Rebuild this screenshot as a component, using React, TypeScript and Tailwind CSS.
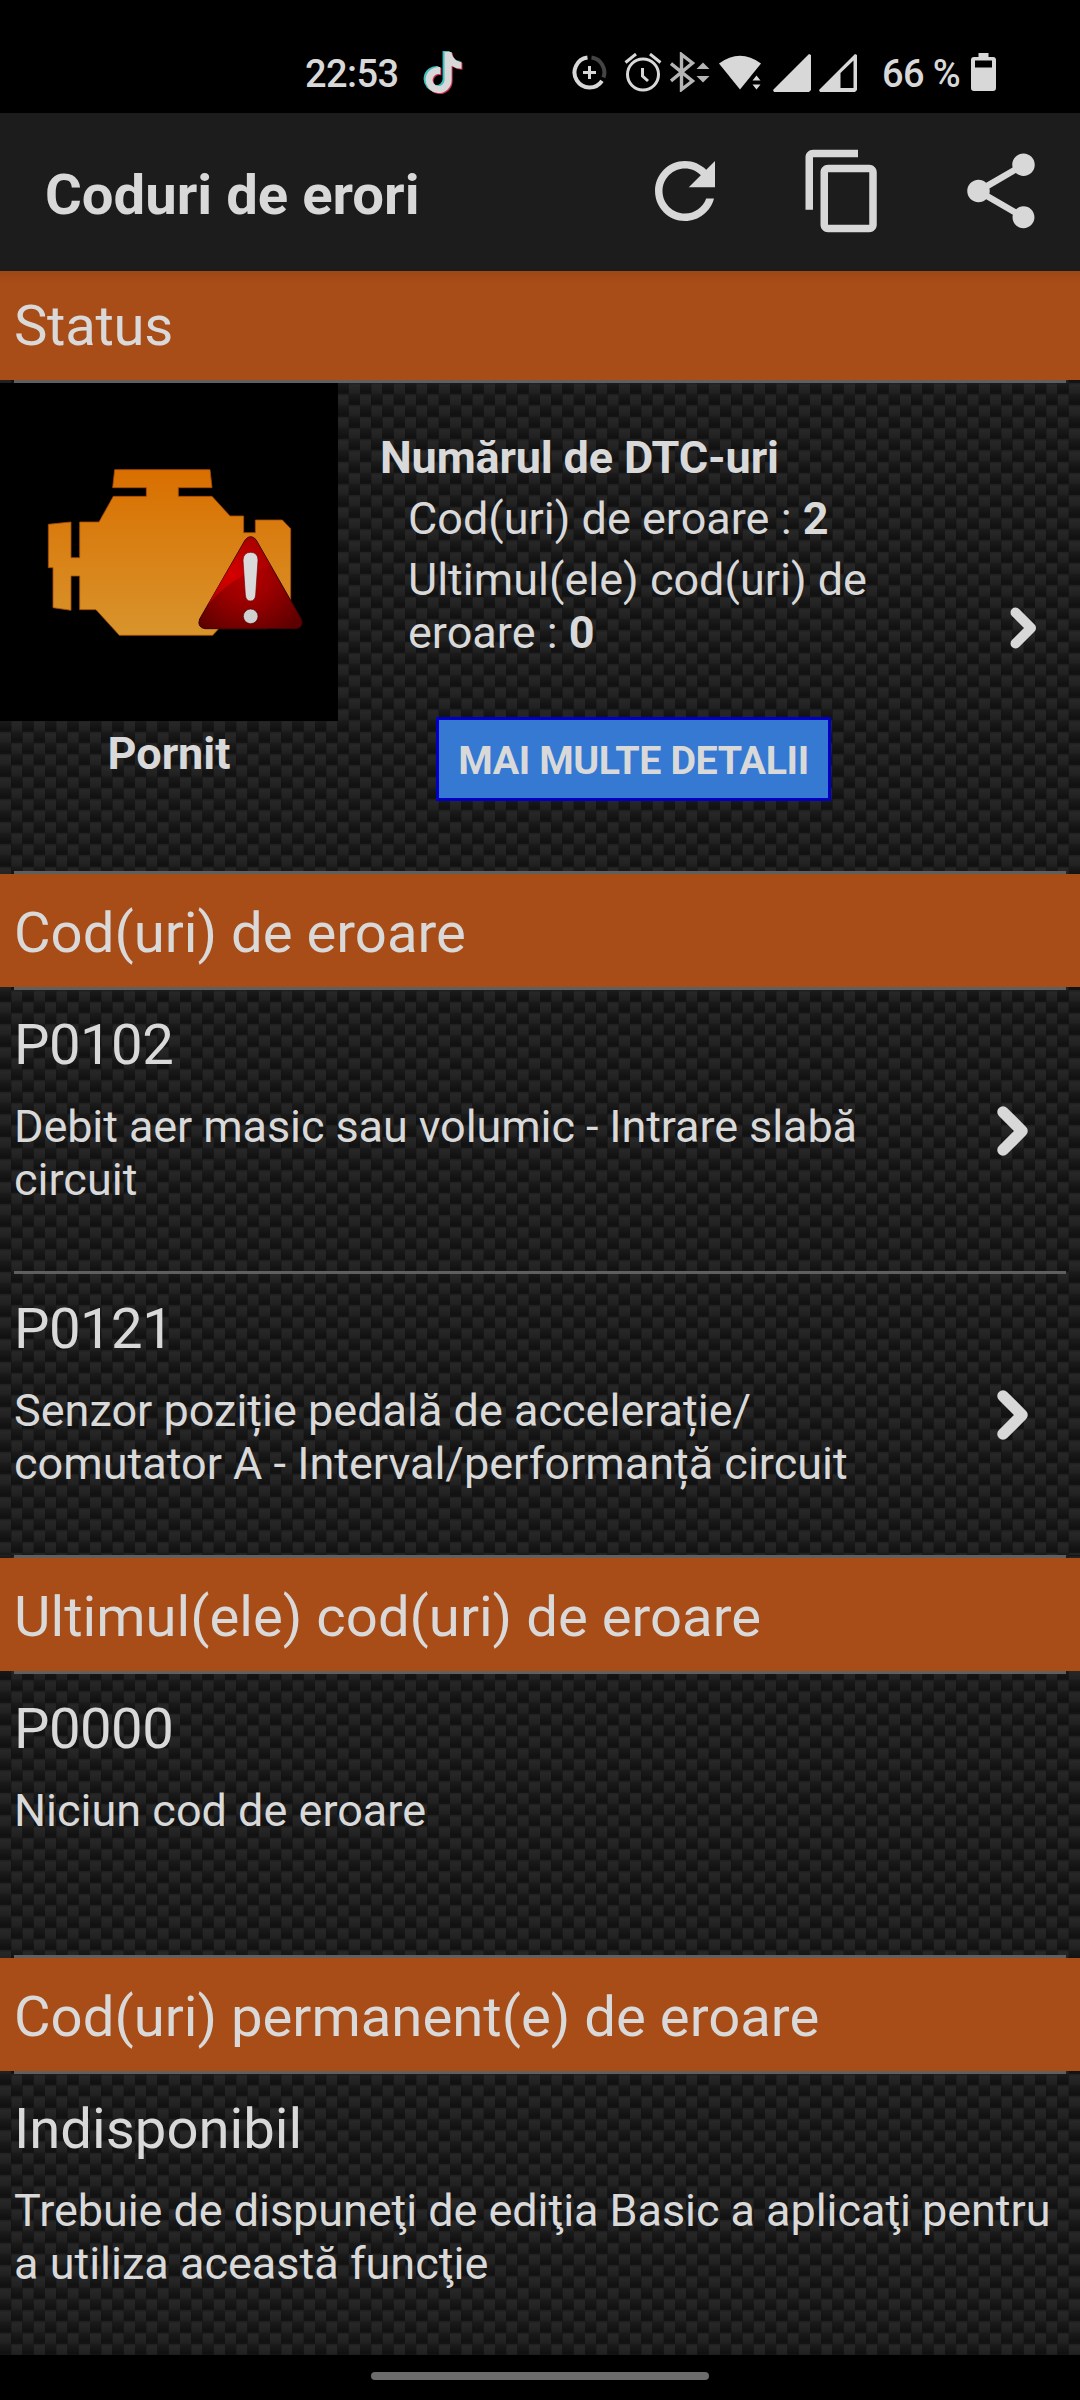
import type { ReactNode } from 'react';
import { FaTiktok } from 'react-icons/fa6';

function CarbonFibre({ id, shift }: { id: string; shift: number }) {
  const tiles = [
    [0, -11],
    [0, 11.5],
    [0, 34],
    [11.25, 0],
    [11.25, 22.5],
    [22.5, -11],
    [22.5, 11.5],
    [22.5, 34],
    [33.75, 0],
    [33.75, 22.5],
  ];
  return (
    <svg className="absolute inset-0 h-full w-full" aria-hidden="true">
      <defs>
        <linearGradient id={`${id}-g`} x1="0" y1="0" x2="0" y2="1">
          <stop offset="0" stopColor="#1e1e1e" />
          <stop offset="0.12" stopColor="#272727" />
          <stop offset="0.45" stopColor="#212121" />
          <stop offset="0.55" stopColor="#1a1a1a" />
          <stop offset="0.9" stopColor="#111111" />
          <stop offset="1" stopColor="#141414" />
        </linearGradient>
        <pattern id={id} width="45" height="45" patternUnits="userSpaceOnUse" y={shift}>
          {tiles.map(([x, y]) => (
            <rect key={`${x}-${y}`} x={x} y={y} width="11.4" height="22.5" fill={`url(#${id}-g)`} />
          ))}
        </pattern>
      </defs>
      <rect width="100%" height="100%" fill={`url(#${id})`} />
    </svg>
  );
}

function Divider() {
  return <div className="relative mx-[14px] h-[3px] bg-[#5f5f5f]" />;
}

function SectionHeader({ children }: { children: ReactNode }) {
  return (
    <>
      <h2 className="relative h-[113px] bg-[#a94d18] pt-[26px] pl-[14px] text-[56.25px] leading-[66px]">
        {children}
      </h2>
      <Divider />
    </>
  );
}

function Chevron() {
  return (
    <svg className="h-[50px] w-[32px] shrink-0" viewBox="0 0 32 50" fill="none">
      <path d="M6 6 25 25 6 44" stroke="#d8d8d8" strokeWidth="11.5" strokeLinecap="round" strokeLinejoin="round" />
    </svg>
  );
}

function CodeItem({ title, arrow, children }: { title: ReactNode; arrow?: boolean; children: ReactNode }) {
  return (
    <div className="relative flex h-[281px] items-center justify-between pr-[51px] pl-[14px]">
      <div className="h-full grow pt-[22px]">
        <h3 className="text-[56.25px] leading-[66px]">{title}</h3>
        <p className="mt-[22px] text-[45px] leading-[53px] whitespace-nowrap">{children}</p>
      </div>
      {arrow && <Chevron />}
    </div>
  );
}

function TroubleCode({ children }: { children: ReactNode }) {
  return <span className="tracking-[-0.55px]">{children}</span>;
}

function StatusBar() {
  return (
    <div className="flex h-[113px] items-start bg-black pl-[305px] text-[#d8d8d8]">
      <span className="mt-[52px] w-[118px] text-[38px] leading-[44px] font-medium tracking-[-0.6px]">22:53</span>
      <div className="relative mt-[51px] h-[43px] w-[40px]">
        <FaTiktok className="absolute top-0 left-0 h-[41px] w-[37px] text-[#3fbfc0]" />
        <FaTiktok className="absolute top-[2px] left-[3px] h-[41px] w-[37px] text-[#cf3355]" />
        <FaTiktok className="absolute top-[1px] left-[1.5px] h-[41px] w-[37px]" />
      </div>
      <svg className="mt-[55px] ml-[109px] h-[35px] w-[35px]" viewBox="0 0 35 35" fill="none" strokeWidth="4">
        <path d="M19.5 2.6A15 15 0 0 1 31.5 22.5" stroke="#444" />
        <path d="M15.5 2.6A15 15 0 1 0 30 25.8" stroke="#d8d8d8" />
        <path d="M17.5 11v13M11 17.500h13" stroke="#d8d8d8" strokeWidth="3" />
      </svg>
      <svg className="mt-[53px] ml-[17px] h-[39px] w-[38px]" viewBox="0 0 38 39" fill="none" stroke="#d8d8d8" strokeWidth="3">
        <circle cx="19" cy="21.500" r="15.500" />
        <path d="M1.500 9.500 12 1M36.500 9.500 26 1M18.500 15v8l5.500 5" />
      </svg>
      <svg className="mt-[52px] ml-[8px] h-[40px] w-[40px]" viewBox="0 0 40 40" fill="none" stroke="#b5b5b5" strokeWidth="3.400">
        <path d="M1 11.500 22.500 29 11.500 37.500V2.500L22.500 11 1 29" />
        <path d="m33 10.500 6.500 6.500h-13zM33 30.500l6.500-6.500h-13z" fill="#b5b5b5" stroke="none" />
      </svg>
      <svg className="mt-[55px] ml-[9px] h-[36px] w-[43px]" viewBox="0 0 43 36" fill="#d8d8d8">
        <path d="M0 8.500Q21-7 42 8.500L21 34.500Z" />
        <path d="m37.500 17.500 6 7.500V36H32V25z" fill="#000" />
        <path d="m37.500 20.500 4 5h-8zM37.500 34.500l4-5h-8z" />
      </svg>
      <svg className="mt-[54px] ml-[11px] h-[38px] w-[38px]" viewBox="0 0 38 38" fill="#d8d8d8">
        <path d="M1 38 0 36 36 0 38 1V36L36 38Z" />
      </svg>
      <svg className="mt-[54px] ml-[8px] h-[38px] w-[38px]" viewBox="0 0 38 38" fill="#d8d8d8" fillRule="evenodd">
        <path d="M1 38 0 36 36 0 38 1V36L36 38ZM21.500 19 34.500 6.500V34H21.500Z" />
      </svg>
      <span className="mt-[52px] ml-[25px] w-[89px] text-[38px] leading-[44px] font-medium tracking-[-0.6px] whitespace-nowrap">
        66 %
      </span>
      <svg className="mt-[53px] h-[38px] w-[25px]" viewBox="0 0 25 38" fill="#d8d8d8" fillRule="evenodd">
        <path d="M7.500 0h10v4H22q3 0 3 3V35q0 3-3 3H3q-3 0-3-3V7q0-3 3-3H7.500ZM4 7.500v7h17v-7Z" />
      </svg>
    </div>
  );
}

function AppBar() {
  return (
    <header className="flex h-[158px] items-center bg-[#1c1c1c] pr-[34px] pl-[45px] text-[#d8d8d8]">
      <h1 className="mt-[5px] grow text-[56.25px] leading-[66px] font-bold">Coduri de erori</h1>
      <div className="mb-[2px] flex gap-[68px]">
        <svg className="h-[90px] w-[90px]" viewBox="0 0 24 24" fill="currentColor">
          <path d="M17.650 6.350C16.200 4.900 14.210 4 12 4c-4.420 0-7.990 3.580-7.990 8s3.570 8 7.990 8c3.730 0 6.840-2.550 7.730-6h-2.080c-.82 2.330-3.040 4-5.650 4-3.310 0-6-2.690-6-6s2.690-6 6-6c1.660 0 3.140.69 4.220 1.780L13 11h7V4l-2.350 2.350z" />
        </svg>
        <svg className="h-[90px] w-[90px]" viewBox="0 0 24 24" fill="currentColor">
          <path d="M16 1H4c-1.100 0-2 .9-2 2v14h2V3h12V1zm3 4H8c-1.100 0-2 .9-2 2v14c0 1.100.9 2 2 2h11c1.100 0 2-.9 2-2V7c0-1.100-.9-2-2-2zm0 16H8V7h11v14z" />
        </svg>
        <svg className="h-[90px] w-[90px]" viewBox="0 0 24 24" fill="currentColor">
          <path d="M18 16.080c-.76 0-1.440.3-1.960.77L8.910 12.700c.05-.23.09-.46.09-.7s-.04-.47-.09-.7l7.050-4.110c.54.5 1.250.81 2.040.81 1.660 0 3-1.340 3-3s-1.340-3-3-3-3 1.340-3 3c0 .24.04.47.09.7L8.040 9.810C7.500 9.310 6.790 9 6 9c-1.660 0-3 1.340-3 3s1.340 3 3 3c.79 0 1.500-.31 2.040-.81l7.120 4.160c-.05.21-.08.43-.08.65 0 1.610 1.310 2.920 2.920 2.920 1.610 0 2.920-1.310 2.920-2.920s-1.310-2.920-2.920-2.920z" />
        </svg>
      </div>
    </header>
  );
}

function EngineLight() {
  return (
    <svg className="h-[338px] w-[338px] bg-black" viewBox="0 -111 1014 1014">
      <defs>
        <linearGradient id="engine" x1="0" y1="0" x2="0" y2="1">
          <stop offset="0" stopColor="#d96f00" />
          <stop offset="1" stopColor="#d8942c" />
        </linearGradient>
        <radialGradient id="warning" gradientUnits="userSpaceOnUse" cx="740" cy="460" r="210">
          <stop offset="0" stopColor="#b80000" />
          <stop offset="0.4" stopColor="#9c0000" />
          <stop offset="1" stopColor="#5c0000" />
        </radialGradient>
        <radialGradient id="gloss" gradientUnits="userSpaceOnUse" cx="695" cy="465" r="130">
          <stop offset="0" stopColor="#d60000" />
          <stop offset="1" stopColor="#a80000" />
        </radialGradient>
      </defs>
      <path
        d="M344 149H630L636 203H535V229H636L690 288H731V338H766V300H847L872 326V560L800 626H656L638 646H358L288 569H239V468H213V571L159 563V443H145V313L213 306V413H239V306H297L340 229H439V203H338Z"
        fill="url(#engine)"
        stroke="#a84b08"
        strokeWidth="2.500"
      />
      <path d="M736 359Q752 341 768 359L904 597Q913 622 888 626H615Q590 622 599 597Z" fill="url(#warning)" stroke="#3b0505" strokeWidth="3" />
      <path d="M737 360Q752 343 767 360L811 437Q700 463 622 556Z" fill="url(#gloss)" />
      <path d="M752 397Q774 397 774 421L767 525Q765 543 751 543 738 543 736 525L729 421Q730 397 752 397Z" fill="#dadada" stroke="#700" strokeWidth="2" />
      <circle cx="752" cy="589" r="22" fill="#d0d0d0" stroke="#500" strokeWidth="2" />
    </svg>
  );
}

function StatusPanel() {
  return (
    <div className="relative flex h-[488px]">
      <div className="w-[338px] text-center">
        <EngineLight />
        <p className="mt-[6px] text-[45px] leading-[53px] font-bold">Pornit</p>
      </div>
      <div className="ml-[42px] w-[560px] pt-[48px] text-[45px] leading-[53px] whitespace-nowrap">
        <p className="font-bold tracking-[-0.15px]">Numărul de DTC-uri</p>
        <p className="mt-[8px] ml-[28px]">
          Cod(uri) de eroare : <b>2</b>
        </p>
        <p className="mt-[8px] ml-[28px]">
          Ultimul(ele) cod(uri) de
          <br />
          eroare : <b>0</b>
        </p>
        <button className="mt-[58px] ml-[56px] flex h-[84px] w-[395px] items-center justify-center border-[3px] border-[#0000c4] bg-[#3579d2] pt-[2px] text-[39.4px] font-bold tracking-[-0.42px]">
          MAI MULTE DETALII
        </button>
      </div>
      <svg className="mt-[224px] ml-[70px] h-[42px] w-[27px]" viewBox="0 0 27 42" fill="none">
        <path d="M5.500 5.500 21 21 5.500 36.500" stroke="#d8d8d8" strokeWidth="10" strokeLinecap="round" strokeLinejoin="round" />
      </svg>
    </div>
  );
}

export default function App() {
  return (
    <div className="flex h-[2400px] w-[1080px] flex-col overflow-hidden bg-black font-[Roboto,sans-serif] text-[#d9d9d9]">
      <StatusBar />
      <AppBar />
      <main>
        <div className="relative">
          <CarbonFibre id="weave-top" shift={-1} />
          <h2 className="relative h-[109px] bg-[#a94d18] bg-linear-to-b from-[#9c4717] to-[#a94d18] to-[12px] pt-[22px] pl-[14px] text-[56.25px] leading-[66px] tracking-[-0.3px]">
            Status
          </h2>
          <Divider />
          <StatusPanel />
          <Divider />
          <SectionHeader>Cod(uri) de eroare</SectionHeader>
          <CodeItem title={<TroubleCode>P0102</TroubleCode>} arrow>
            <span className="tracking-[-0.1px]">Debit aer masic sau volumic - Intrare slabă</span>
            <br />
            circuit
          </CodeItem>
          <Divider />
          <CodeItem title={<TroubleCode>P0121</TroubleCode>} arrow>
            Senzor poziție pedală de accelerație/
            <br />
            comutator A - Interval/performanță circuit
          </CodeItem>
        </div>
        <div className="relative">
          <CarbonFibre id="weave-bottom" shift={1} />
          <Divider />
          <SectionHeader>Ultimul(ele) cod(uri) de eroare</SectionHeader>
          <CodeItem title={<TroubleCode>P0000</TroubleCode>}>Niciun cod de eroare</CodeItem>
          <Divider />
          <SectionHeader>Cod(uri) permanent(e) de eroare</SectionHeader>
          <CodeItem title="Indisponibil">
            <span className="tracking-[-0.06px]">Trebuie de dispuneţi de ediţia Basic a aplicaţi pentru</span>
            <br />a utiliza această funcţie
          </CodeItem>
        </div>
      </main>
      <footer className="flex h-[45px] justify-center bg-black pt-[17px]">
        <div className="h-[8px] w-[338px] rounded-full bg-[#6c6c6c]" />
      </footer>
    </div>
  );
}
